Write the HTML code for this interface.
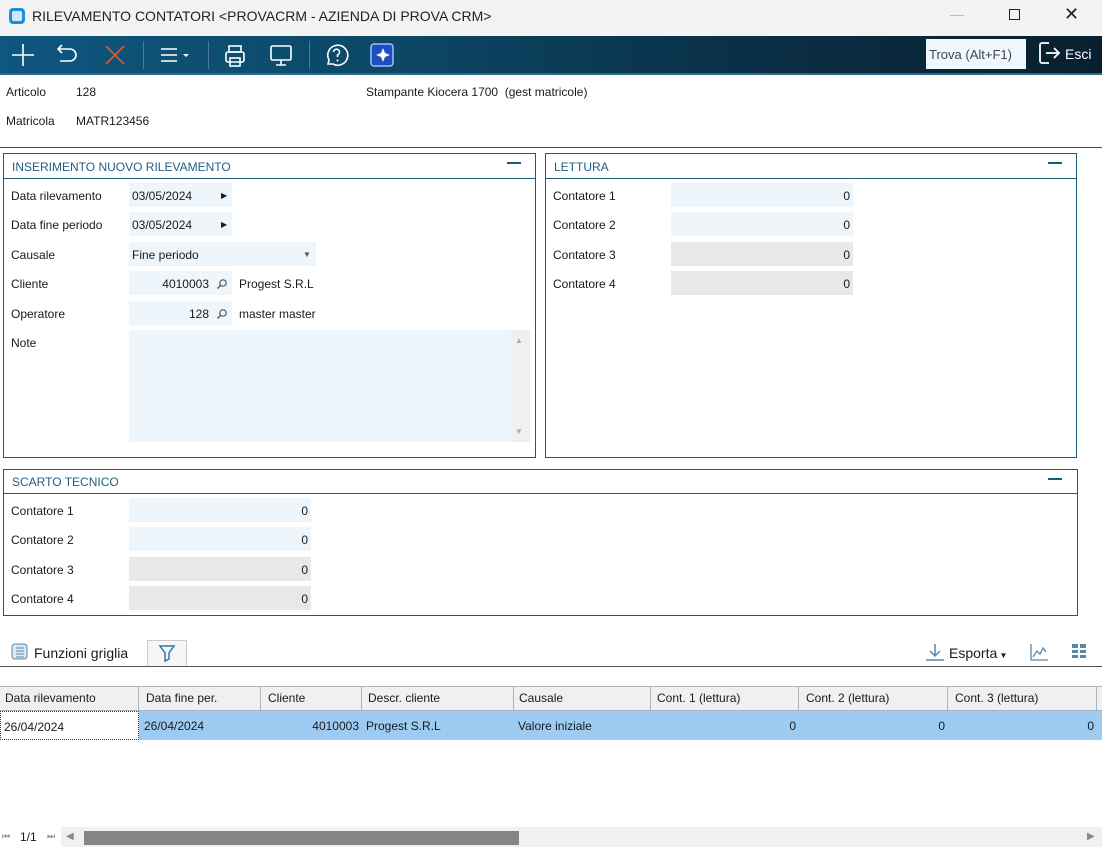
<!DOCTYPE html>
<html><head><meta charset="utf-8"><style>
*{box-sizing:border-box;margin:0;padding:0}
body{width:1102px;height:847px;overflow:hidden;background:#fff;font-family:"Liberation Sans",sans-serif;font-size:12px;color:#1a1a1a;position:relative}
.a{position:absolute;white-space:nowrap}
.title{left:0;top:0;width:1102px;height:36px;background:#f3f3f3}
.tb{left:0;top:36px;width:1102px;height:39px;background:linear-gradient(90deg,#0f5680 0%,#0c4866 35%,#0a3149 65%,#091f2e 100%);border-bottom:2px solid #2b6a8a}
.sep{width:1px;height:28px;background:#4d7a96;top:41px}
.panel{border:1px solid #1f5a78;background:#fff}
.ph{color:#1f5f82;font-size:12px}
.pl{height:1px;background:#1f5a78}
.inp{background:#eef6fc;height:24px}
.grey{background:#e8e8e8;height:24px}
.r{text-align:right}
.gh{top:686px;height:25px;background:#f0f0f0;border-top:1px solid #aab4c0;border-bottom:1px solid #aab4c0;border-right:1px solid #aab4c0;padding:4px 5px}
.gd{top:711px;height:29px;background:#9dcbf2;padding:8px 5px}
</style></head><body>
<div class="a title"></div>
<div class="a" style="left:9px;top:8px;width:16px;height:16px;border-radius:4px;background:#1f8fd6"><div style="margin:3px;width:10px;height:10px;border-radius:2px;background:#cfeaff"></div></div>
<div class="a" style="left:32px;top:8px;font-size:14px;color:#222">RILEVAMENTO CONTATORI &lt;PROVACRM - AZIENDA DI PROVA CRM&gt;</div>
<div class="a" style="left:950px;top:15px;width:14px;height:1px;background:#bbb"></div>
<div class="a" style="left:1009px;top:9px;width:11px;height:11px;border:1.5px solid #222"></div>
<div class="a" style="left:1064px;top:4px;font-size:18px;color:#222">✕</div>
<div class="a tb"></div>
<svg class="a" style="left:0;top:36px" width="400" height="38">
<g stroke="#fff" stroke-width="1.6" fill="none">
<path d="M23 8v22M12 19h22"/>
<path d="M62 9l-4 4 4 4M58 13h12a6 6 0 0 1 0 12h-10"/>
<path d="M106 10l18 18M124 10l-18 18" stroke="#e2572a"/>
<path d="M161 13h16M161 19h16M161 25h16" stroke-width="1.4"/>
<rect x="226" y="16" width="18" height="10" rx="2"/><rect x="229" y="10" width="12" height="6"/><rect x="230" y="22" width="10" height="8"/>
<rect x="271" y="10" width="20" height="14" rx="1.5"/><path d="M276 29h10M281 24v5"/>
<path d="M328 28l1-4a10 10 0 1 1 4 4z"/><path d="M333.5 16a3 3 0 1 1 4 3v2"/>
</g>
<path d="M183 18h6l-3 3z" fill="#fff"/>
<circle cx="337.5" cy="24.5" r="1" fill="#fff"/>
<rect x="371" y="8" width="22" height="22" rx="3" fill="#1a4fbd" stroke="#9ac0ff" stroke-width="1.5"/>
<path d="M383 12l2 5 5 2-5 2-2 5-2-5-5-2 5-2z" fill="#fff"/>
</svg>
<div class="a sep" style="left:143px"></div><div class="a sep" style="left:208px"></div><div class="a sep" style="left:309px"></div>
<div class="a" style="left:926px;top:39px;width:100px;height:30px;background:#f0f8ff;color:#444;font-size:13px;padding:8px 3px">Trova (Alt+F1)</div>
<svg class="a" style="left:1038px;top:41px" width="26" height="26"><g stroke="#fff" stroke-width="1.8" fill="none"><path d="M11 2H4a2 2 0 0 0-2 2v16a2 2 0 0 0 2 2h7"/><path d="M8 12h13M16 7l5 5-5 5"/></g></svg>
<div class="a" style="left:1065px;top:46px;color:#fff;font-size:14px">Esci</div>

<div class="a" style="left:6px;top:85px">Articolo</div><div class="a" style="left:76px;top:85px">128</div>
<div class="a" style="left:366px;top:85px">Stampante Kiocera 1700&nbsp; (gest matricole)</div>
<div class="a" style="left:6px;top:114px">Matricola</div><div class="a" style="left:76px;top:114px">MATR123456</div>
<div class="a" style="left:0;top:147px;width:1102px;height:1px;background:#1f5a78"></div>

<div class="a panel" style="left:3px;top:153px;width:533px;height:305px"></div>
<div class="a ph" style="left:12px;top:160px">INSERIMENTO NUOVO RILEVAMENTO</div>
<div class="a pl" style="left:4px;top:178px;width:531px"></div>
<div class="a" style="left:507px;top:162px;width:14px;height:1.5px;background:#1f5a78"></div>
<div class="a" style="left:11px;top:189px">Data rilevamento</div>
<div class="a inp" style="left:129px;top:183px;width:103px;padding:6px 3px">03/05/2024<span style="position:absolute;left:92px;font-size:8px;top:8px">▶</span></div>
<div class="a" style="left:11px;top:218px">Data fine periodo</div>
<div class="a inp" style="left:129px;top:212px;width:103px;padding:6px 3px">03/05/2024<span style="position:absolute;left:92px;font-size:8px;top:8px">▶</span></div>
<div class="a" style="left:11px;top:248px">Causale</div>
<div class="a inp" style="left:129px;top:242px;width:187px;padding:6px 3px">Fine periodo<span style="position:absolute;left:174px;font-size:8px;top:8px;color:#555">▼</span></div>
<div class="a" style="left:11px;top:277px">Cliente</div>
<div class="a inp r" style="left:129px;top:271px;width:103px;padding:6px 23px 0 0">4010003</div>
<svg class="a" style="left:216px;top:278px" width="12" height="12"><circle cx="7" cy="5" r="3.2" fill="none" stroke="#555" stroke-width="1.2"/><path d="M4.6 7.4L1.5 10.5" stroke="#555" stroke-width="1.4"/></svg>
<div class="a" style="left:239px;top:277px">Progest S.R.L</div>
<div class="a" style="left:11px;top:307px">Operatore</div>
<div class="a inp r" style="left:129px;top:301px;width:103px;padding:6px 23px 0 0">128</div>
<svg class="a" style="left:216px;top:308px" width="12" height="12"><circle cx="7" cy="5" r="3.2" fill="none" stroke="#555" stroke-width="1.2"/><path d="M4.6 7.4L1.5 10.5" stroke="#555" stroke-width="1.4"/></svg>
<div class="a" style="left:239px;top:307px">master master</div>
<div class="a" style="left:11px;top:336px">Note</div>
<div class="a" style="left:129px;top:330px;width:401px;height:112px;background:#eef6fc"></div>
<div class="a" style="left:511px;top:330px;width:19px;height:112px;background:#eef0f2"></div>
<div class="a" style="left:515px;top:336px;font-size:8px;color:#aaa">▲</div>
<div class="a" style="left:515px;top:427px;font-size:8px;color:#aaa">▼</div>

<div class="a panel" style="left:545px;top:153px;width:532px;height:305px"></div>
<div class="a ph" style="left:554px;top:160px">LETTURA</div>
<div class="a pl" style="left:546px;top:178px;width:530px"></div>
<div class="a" style="left:1048px;top:162px;width:14px;height:1.5px;background:#1f5a78"></div>
<div class="a" style="left:553px;top:189px">Contatore 1</div><div class="a inp r" style="left:671px;top:183px;width:182px;padding:6px 3px">0</div>
<div class="a" style="left:553px;top:218px">Contatore 2</div><div class="a inp r" style="left:671px;top:212px;width:182px;padding:6px 3px">0</div>
<div class="a" style="left:553px;top:248px">Contatore 3</div><div class="a grey r" style="left:671px;top:242px;width:182px;padding:6px 3px">0</div>
<div class="a" style="left:553px;top:277px">Contatore 4</div><div class="a grey r" style="left:671px;top:271px;width:182px;padding:6px 3px">0</div>

<div class="a panel" style="left:3px;top:469px;width:1075px;height:147px"></div>
<div class="a ph" style="left:12px;top:475px">SCARTO TECNICO</div>
<div class="a pl" style="left:4px;top:493px;width:1073px"></div>
<div class="a" style="left:1048px;top:478px;width:14px;height:1.5px;background:#1f5a78"></div>
<div class="a" style="left:11px;top:504px">Contatore 1</div><div class="a inp r" style="left:129px;top:498px;width:182px;padding:6px 3px">0</div>
<div class="a" style="left:11px;top:533px">Contatore 2</div><div class="a inp r" style="left:129px;top:527px;width:182px;padding:6px 3px">0</div>
<div class="a" style="left:11px;top:563px">Contatore 3</div><div class="a grey r" style="left:129px;top:557px;width:182px;padding:6px 3px">0</div>
<div class="a" style="left:11px;top:592px">Contatore 4</div><div class="a grey r" style="left:129px;top:586px;width:182px;padding:6px 3px">0</div>

<svg class="a" style="left:11px;top:643px" width="18" height="18"><rect x="1" y="1" width="15" height="15" rx="3" fill="#dbe9f5" stroke="#5a88a8"/><path d="M5 5h8M5 8h8M5 11h8M5 14h8" stroke="#5a88a8"/></svg>
<div class="a" style="left:34px;top:645px;font-size:14px">Funzioni griglia</div>
<div class="a" style="left:147px;top:640px;width:40px;height:26px;border:1px solid #ccc;border-bottom:none;background:#f6f6f6"></div>
<svg class="a" style="left:158px;top:643px" width="18" height="20"><path d="M2 3h14l-5 7v6l-4 2v-8z" fill="none" stroke="#2a78b0" stroke-width="1.5"/></svg>
<svg class="a" style="left:925px;top:642px" width="20" height="20"><path d="M10 2v12M5 9l5 5 5-5M1 18h18" stroke="#5a88a8" stroke-width="1.5" fill="none"/></svg>
<div class="a" style="left:949px;top:645px;font-size:14px">Esporta<span style="font-size:8px"> ▼</span></div>
<svg class="a" style="left:1029px;top:642px" width="20" height="20"><path d="M2 2v16h17M4 15l4-6 3 3 3-6 3 4" stroke="#5a88a8" stroke-width="1.3" fill="none"/></svg>
<svg class="a" style="left:1071px;top:643px" width="16" height="16" fill="#5a88a8"><rect x="1" y="1" width="6" height="4"/><rect x="9" y="1" width="6" height="4"/><rect x="1" y="7" width="6" height="3"/><rect x="9" y="7" width="6" height="3"/><rect x="1" y="12" width="6" height="3"/><rect x="9" y="12" width="6" height="3"/></svg>
<div class="a" style="left:0;top:666px;width:1102px;height:1px;background:#555"></div>

<div class="a gh" style="left:0;width:139px">Data rilevamento</div>
<div class="a gh" style="left:139px;width:122px;padding-left:7px">Data fine per.</div>
<div class="a gh" style="left:261px;width:101px;padding-left:7px">Cliente</div>
<div class="a gh" style="left:362px;width:152px;padding-left:6px">Descr. cliente</div>
<div class="a gh" style="left:514px;width:137px;padding-left:5px">Causale</div>
<div class="a gh" style="left:651px;width:148px;padding-left:6px">Cont. 1 (lettura)</div>
<div class="a gh" style="left:799px;width:149px;padding-left:7px">Cont. 2 (lettura)</div>
<div class="a gh" style="left:948px;width:149px;padding-left:7px">Cont. 3 (lettura)</div>
<div class="a gh" style="left:1097px;width:5px;border-right:none"></div>
<div class="a" style="left:0;top:711px;width:139px;height:29px;border:1px dotted #333;padding:8px 3px">26/04/2024</div>
<div class="a gd" style="left:139px;width:122px;padding-left:5px">26/04/2024</div>
<div class="a gd r" style="left:261px;width:101px;padding-right:3px">4010003</div>
<div class="a gd" style="left:362px;width:152px;padding-left:4px">Progest S.R.L</div>
<div class="a gd" style="left:514px;width:137px;padding-left:4px">Valore iniziale</div>
<div class="a gd r" style="left:651px;width:148px;padding-right:3px">0</div>
<div class="a gd r" style="left:799px;width:149px;padding-right:3px">0</div>
<div class="a gd r" style="left:948px;width:149px;padding-right:3px">0</div>
<div class="a gd" style="left:1097px;width:5px"></div>

<div class="a" style="left:2px;top:831px;font-size:9px;color:#888">⏮</div>
<div class="a" style="left:20px;top:830px">1/1</div>
<div class="a" style="left:47px;top:831px;font-size:9px;color:#888">⏭</div>
<div class="a" style="left:61px;top:827px;width:1041px;height:20px;background:#f0f0f0"></div>
<div class="a" style="left:66px;top:831px;font-size:10px;color:#888">◀</div>
<div class="a" style="left:84px;top:831px;width:435px;height:14px;background:#858585"></div>
<div class="a" style="left:1087px;top:831px;font-size:10px;color:#888">▶</div>
</body></html>
